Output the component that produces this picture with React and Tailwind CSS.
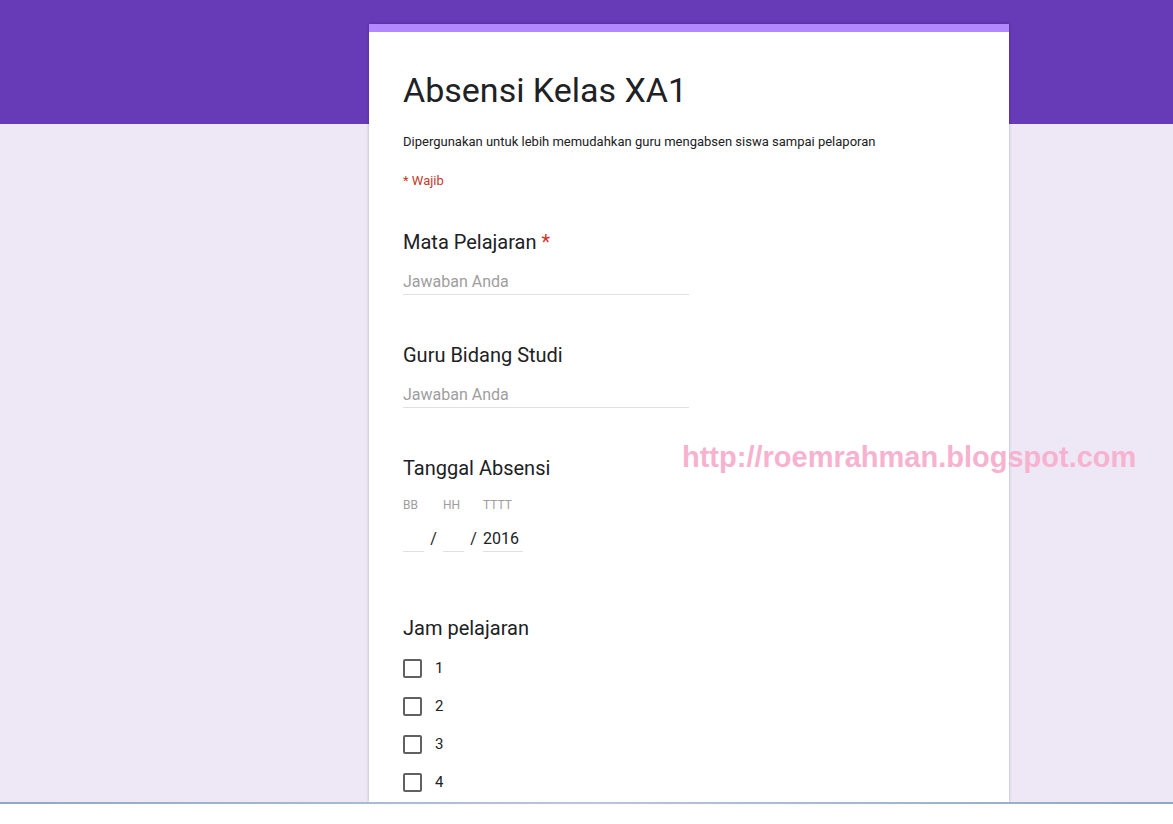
import { useState } from 'react';

const TextQuestion = ({ label, required }) => (
  <div className="mb-[47px]">
    <div className="text-[20px] leading-[26px] text-[#202124]">
      {label}
      {required && <span className="text-[#d93025]"> *</span>}
    </div>
    <div className="mt-[17px] w-[286px] border-b border-[#e0e0e0] pb-[2px] text-[16px] leading-[20px] text-[#9e9e9e]">
      Jawaban Anda
    </div>
  </div>
);

const DateField = ({ label, width, value }) => (
  <div style={{ width }}>
    <div className="text-[12px] leading-[14px] text-[#9e9e9e]">{label}</div>
    <div className="mt-[17px] h-[23px] border-b border-[#e0e0e0] text-[16px] leading-[20px] text-[#202124]">
      {value}
    </div>
  </div>
);

const Slash = () => (
  <div className="mt-[31px] w-[19px] text-center text-[16px] leading-[20px] text-[#202124]">/</div>
);

export default function App() {
  const [checked, setChecked] = useState({});

  const toggle = (n) => setChecked((prev) => ({ ...prev, [n]: !prev[n] }));

  return (
    <div className="relative h-[824px] overflow-hidden bg-white font-['Roboto',sans-serif]">
      <div className="h-[802px] bg-[#ede7f6]">
        <div className="h-[124px] bg-[#673ab7]" />
        {/* Form card */}
        <div className="ml-[369px] -mt-[100px] h-[778px] w-[640px] overflow-hidden bg-white shadow-[0_0_3px_rgba(0,0,0,0.25)]">
          <div className="h-[8px] bg-[#b388ff]" />
          <div className="px-[34px] pt-[37px]">
            <h1 className="text-[34px] leading-[42px] text-[#202124]">Absensi Kelas XA1</h1>
            <p className="mt-[22px] text-[13px] leading-[18px] text-[#202124]">
              Dipergunakan untuk lebih memudahkan guru mengabsen siswa sampai pelaporan
            </p>
            <p className="mt-[21px] text-[13px] leading-[18px] text-[#c53929]">* Wajib</p>

            <div className="mt-[39px]">
              <TextQuestion label="Mata Pelajaran" required />
              <TextQuestion label="Guru Bidang Studi" />

              {/* Tanggal */}
              <div className="mb-[63px]">
                <div className="text-[20px] leading-[26px] text-[#202124]">Tanggal Absensi</div>
                <div className="mt-[17px] flex items-start">
                  <DateField label="BB" width="21px" />
                  <Slash />
                  <DateField label="HH" width="21px" />
                  <Slash />
                  <DateField label="TTTT" width="40px" value="2016" />
                </div>
              </div>

              {/* Jam pelajaran */}
              <div>
                <div className="text-[20px] leading-[26px] text-[#202124]">Jam pelajaran</div>
                <div className="mt-[17px] flex flex-col gap-[18px]">
                  {[1, 2, 3, 4].map((n) => (
                    <label key={n} className="flex h-[20px] cursor-pointer items-center gap-[13px]">
                      <span
                        onClick={() => toggle(n)}
                        className={`h-[19px] w-[19px] rounded-[2px] border-2 ${
                          checked[n] ? 'border-[#673ab7] bg-[#673ab7]' : 'border-[#616161]'
                        }`}
                      />
                      <span className="text-[15px] leading-[20px] text-[#202124]">{n}</span>
                    </label>
                  ))}
                </div>
              </div>
            </div>
          </div>
        </div>
      </div>
      <div className="h-[2px] bg-gradient-to-r from-[#8fa6c4] via-[#b8c8da] to-[#8fa6c4]" />

      {/* Watermark */}
      <div className="pointer-events-none absolute left-[682px] top-[440px] font-['Liberation_Sans',Arial,sans-serif] text-[29px] font-bold leading-[34px] text-[#f7b2cf]">
        http://roemrahman.blogspot.com
      </div>
    </div>
  );
}
